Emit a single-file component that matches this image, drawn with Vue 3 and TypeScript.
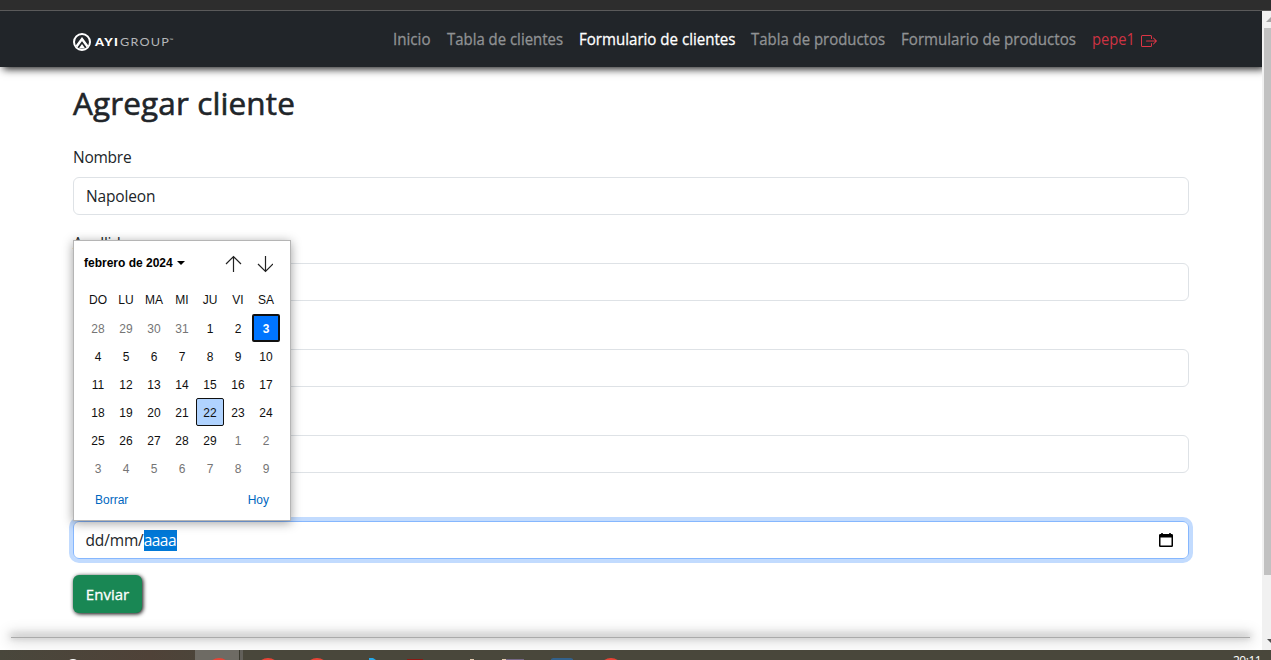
<script setup lang="ts">
interface NavItem { text: string; width: number; active?: boolean }
interface Day { n: number; muted: boolean; today: boolean; focused: boolean }

const nav: NavItem[] = [
  { text: 'Inicio', width: 37.5 },
  { text: 'Tabla de clientes', width: 116 },
  { text: 'Formulario de clientes', width: 156.500, active: true },
  { text: 'Tabla de productos', width: 134 },
  { text: 'Formulario de productos', width: 175 },
]
const fields = [
  { label: 'Nombre', value: 'Napoleon' },
  { label: 'Apellido', value: '' },
  { label: '', value: '' },
  { label: '', value: '' },
]
const weekdays = ['DO', 'LU', 'MA', 'MI', 'JU', 'VI', 'SA']
const days: Day[] = Array.from({ length: 42 }, (_, i) => {
  const d = new Date(2024, 0, 28 + i)
  const inMonth = d.getMonth() === 1
  return { n: d.getDate(), muted: !inMonth, today: inMonth && d.getDate() === 3, focused: inMonth && d.getDate() === 22 }
})
</script>

<template>
  <div class="screen">
    <div class="chrome"></div>
    <div class="viewport">
      <div class="page">
        <header class="navbar">
          <svg class="logo" width="104" height="20" viewBox="0 0 104 20">
            <circle cx="9" cy="10" r="8" fill="none" stroke="#fff" stroke-width="2" />
            <path d="M3.500 14.500 9 7l5.500 7.500" fill="none" stroke="#fff" stroke-width="2.500" />
            <path d="M5.800 16.500 9 12l3.200 4.500z" fill="#fff" />
            <text x="22" y="13.800" class="ayi" textLength="24" lengthAdjust="spacingAndGlyphs">AYI</text>
            <text x="47" y="13.800" class="group" textLength="50" lengthAdjust="spacingAndGlyphs">GROUP</text>
            <text x="96.500" y="10" class="tm">™</text>
          </svg>
          <nav>
            <svg
              v-for="item in nav" :key="item.text" class="link" :class="{ active: item.active }"
              :width="item.width" height="24"
            >
              <text x="0" y="17.200" :textLength="item.width" lengthAdjust="spacingAndGlyphs">{{ item.text }}</text>
            </svg>
            <span class="user">
              <svg class="link" width="43" height="24"><text x="0" y="17.200" textLength="43" lengthAdjust="spacingAndGlyphs">pepe1</text></svg>
              <svg class="exit" width="16" height="16" viewBox="0 0 16 16" fill="currentColor">
                <path fill-rule="evenodd" d="M10 12.5a.5.5 0 0 1-.5.5h-8a.5.5 0 0 1-.5-.5v-9a.5.5 0 0 1 .5-.5h8a.5.5 0 0 1 .5.5v2a.5.5 0 0 0 1 0v-2A1.5 1.5 0 0 0 9.500 2h-8A1.500 1.500 0 0 0 0 3.500v9A1.500 1.500 0 0 0 1.500 14h8a1.500 1.500 0 0 0 1.500-1.500v-2a.5.5 0 0 0-1 0z" />
                <path fill-rule="evenodd" d="M15.854 8.354a.5.5 0 0 0 0-.708l-3-3a.5.5 0 0 0-.708.708L14.293 7.500H5.500a.5.5 0 0 0 0 1h8.793l-2.147 2.146a.5.5 0 0 0 .708.708z" />
              </svg>
            </span>
          </nav>
        </header>

        <main>
          <h2>Agregar cliente</h2>
          <div v-for="(f, i) in fields" :key="i" class="field">
            <label>{{ f.label }}</label>
            <div class="input">{{ f.value }}</div>
          </div>
          <div class="field">
            <label></label>
            <div class="input date">
              <span class="date-text">dd/mm/<span class="selected">aaaa</span></span>
              <svg width="14" height="15" viewBox="0 0 14 15">
                <path d="M3 0v2M11 0v2" stroke="#000" stroke-width="1.6" />
                <rect x=".75" y="1.75" width="12.500" height="11.500" rx=".6" fill="none" stroke="#000" stroke-width="1.500" />
                <path d="M1 1.500h12v3H1z" />
              </svg>
            </div>
          </div>
          <button type="button">Enviar</button>
        </main>
        <div class="rule"></div>

        <section class="calendar">
          <div class="cal-head">
            <span class="month">febrero de 2024</span>
            <i class="caret"></i>
            <svg class="arrows" width="48" height="18" viewBox="0 0 48 18" fill="none" stroke="#222" stroke-width="1.200">
              <path d="M8.500 17V1.500M1 9l7.500-7.500L16 9M40.500 1v15.500M33 9l7.500 7.500L48 9" />
            </svg>
          </div>
          <div class="grid week"><span v-for="w in weekdays" :key="w">{{ w }}</span></div>
          <div class="grid">
            <span v-for="(d, i) in days" :key="i" class="day" :class="{ muted: d.muted, today: d.today, focused: d.focused }">{{ d.n }}</span>
          </div>
          <div class="cal-foot"><span>Borrar</span><span>Hoy</span></div>
        </section>
      </div>
      <div class="scrollbar">
        <svg width="9" height="639" viewBox="0 0 9 639">
          <path d="M4 11h5V6z" fill="#a3a3a3" />
          <path d="M2 17h7v547H2z" fill="#c1c1c1" />
          <path d="M5 628h4v4z" fill="#505050" />
        </svg>
      </div>
    </div>
    <footer class="taskbar">
      <svg width="1271" height="10" viewBox="0 0 1271 10">
        <path d="M195 0h44v10h-44z" fill="#6e6b64" />
        <path d="M239 0h1v10h-1z" fill="#3a392f" />
        <path d="M240 0h3v10h-3z" fill="#62605a" />
        <circle cx="73" cy="16" r="7" fill="#fff" />
        <g fill="#e94335">
          <circle cx="219" cy="20" r="12" /><circle cx="268" cy="20" r="12" />
          <circle cx="317" cy="20" r="12" /><circle cx="611" cy="20" r="12" />
        </g>
        <path d="M369 10V8h4l3 2z" fill="#24a8e8" />
        <path d="M407 9h16v1h-16z" fill="#8d1712" />
        <path d="M470 10V9h4v1z" fill="#e2cab0" />
        <path d="M502 9h4v1h-4z" fill="#e2cab0" /><path d="M506 9h18v1h-18z" fill="#756787" />
        <path d="M551 10V9l2-1h18l2 1v1z" fill="#32618c" />
        <text x="1233" y="14.500" class="clock">20:11</text>
      </svg>
    </footer>
  </div>
</template>

<style>
html, body { margin: 0; overflow: hidden; }
</style>

<style scoped>
* { box-sizing: border-box; }
.screen { width: 1271px; height: 660px; display: flex; flex-direction: column; overflow: hidden; background: #fff; font: 16px/24px "Segoe UI", "Open Sans", "Noto Sans", sans-serif; color: #212529; }
.chrome { flex: 0 0 11px; background: #2d2d2d; border-bottom: 1px solid #5a5a5a; }
.viewport { flex: 1; min-height: 0; display: flex; }
.page { position: relative; width: 1262px; overflow: hidden; }
.scrollbar { width: 9px; background: #f1f1f1; }
.scrollbar svg, .taskbar svg { display: block; }
.navbar { height: 56px; padding: 0 105px 0 73px; background: #212529; display: flex; align-items: center; justify-content: space-between; box-shadow: 3px 2px 8px rgba(0, 0, 0, .9); }
.logo { margin-top: 5px; }
.ayi { font: 900 10.500px Lato, sans-serif; fill: #fff; letter-spacing: 1px; }
.group { font: 400 10.500px Lato, sans-serif; fill: #b5b7b9; letter-spacing: 1px; }
.tm { font: 5px Lato, sans-serif; fill: #ccc; }
nav { display: flex; align-items: center; gap: 16px; margin-top: 2px; }
.link { display: block; overflow: visible; fill: #909294; stroke: #909294; stroke-width: .3px; }
.link.active { fill: #fff; stroke: #fff; }
.user { display: flex; align-items: center; gap: 6px; color: #dc3545; }
.user .link { fill: #cd3343; stroke: none; }
.exit { margin-top: 2px; }
main { padding: 17px 73px 0; }
h2 { margin: 0 0 23px; font-size: 31.500px; line-height: 38px; font-weight: 500; letter-spacing: .12px; -webkit-text-stroke: .6px #212529; }
.field { margin-bottom: 16px; }
label { display: block; height: 24px; margin-bottom: 8px; font-size: 15.500px; letter-spacing: -.25px; }
.input { width: 1116px; height: 38px; padding: 6px 12px; border: 1px solid #dee2e6; border-radius: 6px; font-size: 15.500px; letter-spacing: -.15px; }
.date { display: flex; align-items: center; justify-content: space-between; padding-right: 15px; border-color: #86b7fe; box-shadow: 0 0 0 4px #c2dbfe; }
.date-text { margin-top: -1px; margin-left: -.5px; }
.selected { display: inline-block; width: 33px; height: 21px; line-height: 20px; letter-spacing: -.5px; color: #fff; background: #0078d7; }
button { display: block; width: 69px; height: 38px; padding: 0; border: 0; border-radius: 6px; color: #fff; background: #198754; font: 500 15px/24px "Segoe UI", "Open Sans", sans-serif; -webkit-text-stroke: .3px #fff; box-shadow: 1px 1px 4px #000; }
.rule { width: 1239px; height: 1px; margin: 24px 0 0 11px; background: #aaa; box-shadow: 0 1px 4px rgba(0, 0, 0, .12), 0 -2px 7px 1px rgba(0, 0, 0, .25), 0 0 15px 3px rgba(0, 0, 0, .2); }
.calendar { position: absolute; left: 73px; top: 229px; width: 218px; height: 281px; background: #fff; border: 1px solid #b5b5b5; padding: 0 10px; box-shadow: 0 2px 10px rgba(0, 0, 0, .38); font: 12px/28px "Liberation Sans", Arial, sans-serif; color: #101010; }
.cal-head { height: 43px; margin-bottom: 2px; display: flex; align-items: center; font-weight: 700; }
.month { white-space: nowrap; color: #000; }
.caret { margin-left: 4px; border: 4px solid transparent; border-top-color: #000; border-bottom: 0; }
.arrows { margin-left: auto; margin-right: 7px; margin-top: 2px; }
.grid { display: grid; grid-template-columns: repeat(7, 28px); grid-auto-rows: 28px; text-align: center; }
.week { height: 28px; }
.day { line-height: 30px; }
.day.muted { color: #757575; }
.day.today { color: #fff; background: #0075ff; border: 2px solid #101010; border-radius: 2px; line-height: 26px; font-weight: 700; }
.day.focused { background: #b0d3ff; border: 1px solid #101010; border-radius: 2px; line-height: 28px; }
.cal-foot { height: 36px; padding: 0 11px; display: flex; justify-content: space-between; align-items: center; color: #0067c0; }
.taskbar { flex: 0 0 10px; overflow: hidden; background: linear-gradient(90deg, #49473c 0, #4f4238 150px, #49473b 240px, #49473b 100%); }
.clock { font: 12px "Open Sans", sans-serif; fill: #fff; letter-spacing: -.5px; }
</style>
